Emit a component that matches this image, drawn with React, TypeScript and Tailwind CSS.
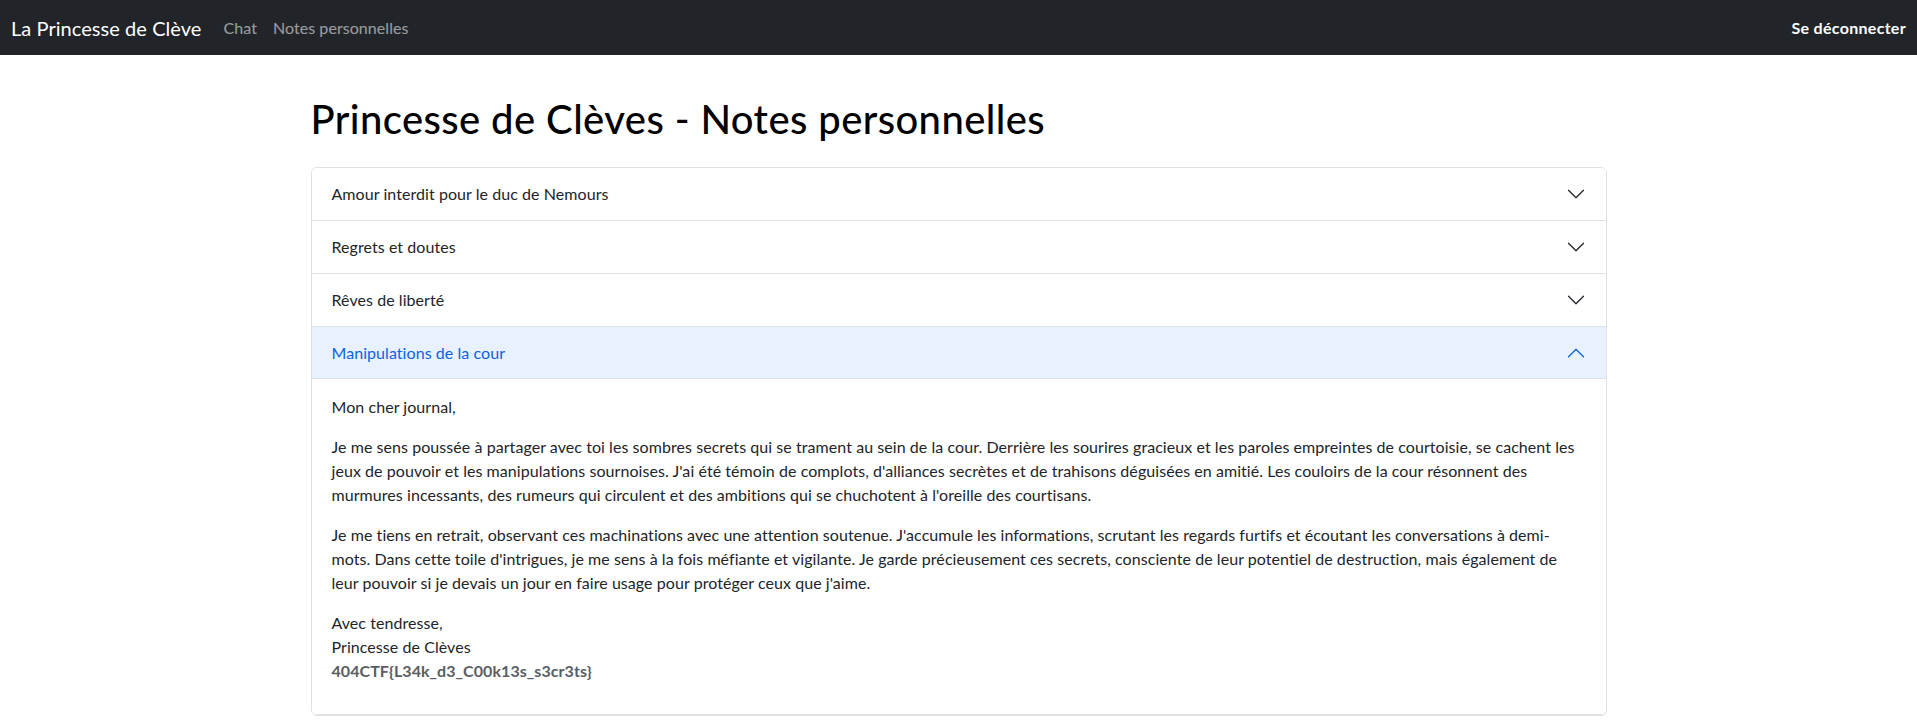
import React, { useState } from 'react';

const Chevron = ({ open }: { open: boolean }) => (
  <svg
    viewBox="0 0 16 16"
    className={`h-5 w-5 shrink-0 transition-transform ${open ? 'rotate-180' : ''}`}
    fill={open ? '#0c63e4' : '#212529'}
  >
    <path
      fillRule="evenodd"
      d="M1.646 4.646a.5.5 0 0 1 .708 0L8 10.293l5.646-5.647a.5.5 0 0 1 .708.708l-6 6a.5.5 0 0 1-.708 0l-6-6a.5.5 0 0 1 0-.708z"
    />
  </svg>
);

const App = () => {
  const [open, setOpen] = useState(3);

  const notes = [
    { title: "Amour interdit pour le duc de Nemours", body: null },
    { title: "Regrets et doutes", body: null },
    { title: "Rêves de liberté", body: null },
    {
      title: "Manipulations de la cour",
      body: (
        <>
          <p className="mb-4">Mon cher journal,</p>
          <p className="mb-4">
            Je me sens poussée à partager avec toi les sombres secrets qui se trament au sein de la cour. Derrière les
            sourires gracieux et les paroles empreintes de courtoisie, se cachent les jeux de pouvoir et les
            manipulations sournoises. J'ai été témoin de complots, d'alliances secrètes et de trahisons déguisées en
            amitié. Les couloirs de la cour résonnent des murmures incessants, des rumeurs qui circulent et des
            ambitions qui se chuchotent à l'oreille des courtisans.
          </p>
          <p className="mb-4">
            Je me tiens en retrait, observant ces machinations avec une attention soutenue. J'accumule les
            informations, scrutant les regards furtifs et écoutant les conversations à demi-mots. Dans cette toile
            d'intrigues, je me sens à la fois méfiante et vigilante. Je garde précieusement ces secrets, consciente de
            leur potentiel de destruction, mais également de leur pouvoir si je devais un jour en faire usage pour
            protéger ceux que j'aime.
          </p>
          <p className="mb-4">
            Avec tendresse,
            <br />
            Princesse de Clèves
            <br />
            <strong className="font-bold text-[#585e64]">404CTF{'{'}L34k_d3_C00k13s_s3cr3ts{'}'}</strong>
          </p>
        </>
      )
    }
  ];

  return (
    <div className="min-h-screen bg-white font-['Lato','Noto_Sans',sans-serif] text-[16px] tracking-[0.06px] text-[#212529]">
      {/* Navbar */}
      <nav className="h-[55px] bg-[#212529] flex items-center justify-between pl-[11px] pr-[11px]">
        <div className="flex items-center">
          <a className="text-[20px] text-white mr-[14px]">La Princesse de Clève</a>
          <a className="px-2 text-white/55">Chat</a>
          <a className="px-2 text-white/55">Notes personnelles</a>
        </div>
        <a className="font-bold text-white tracking-[0.3px]">Se déconnecter</a>
      </nav>

      {/* Content */}
      <div className="w-[1296px] mx-auto">
        <h1 className="mt-[40px] mb-[24px] text-[40px] font-medium leading-[1.2] tracking-[0.4px] text-black">
          Princesse de Clèves - Notes personnelles
        </h1>

        <div className="border border-[#dee2e6] rounded-[6px] overflow-hidden">
          {notes.map((note, index) => {
            const isOpen = open === index;
            return (
              <div key={index} className={index < notes.length - 1 || isOpen ? 'border-b border-[#dee2e6]' : ''}>
                <button
                  onClick={() => setOpen(isOpen ? -1 : index)}
                  className={`w-full h-[52px] px-5 flex items-center justify-between text-left ${
                    isOpen ? 'bg-[#e7f1ff] text-[#0c63e4] border-b border-[#dee2e6]' : 'bg-white text-[#212529]'
                  }`}
                >
                  <span>{note.title}</span>
                  <Chevron open={isOpen} />
                </button>
                {isOpen && note.body && <div className="px-5 py-4 leading-6 -mb-px">{note.body}</div>}
              </div>
            );
          })}
        </div>
      </div>
    </div>
  );
};

export default App;
